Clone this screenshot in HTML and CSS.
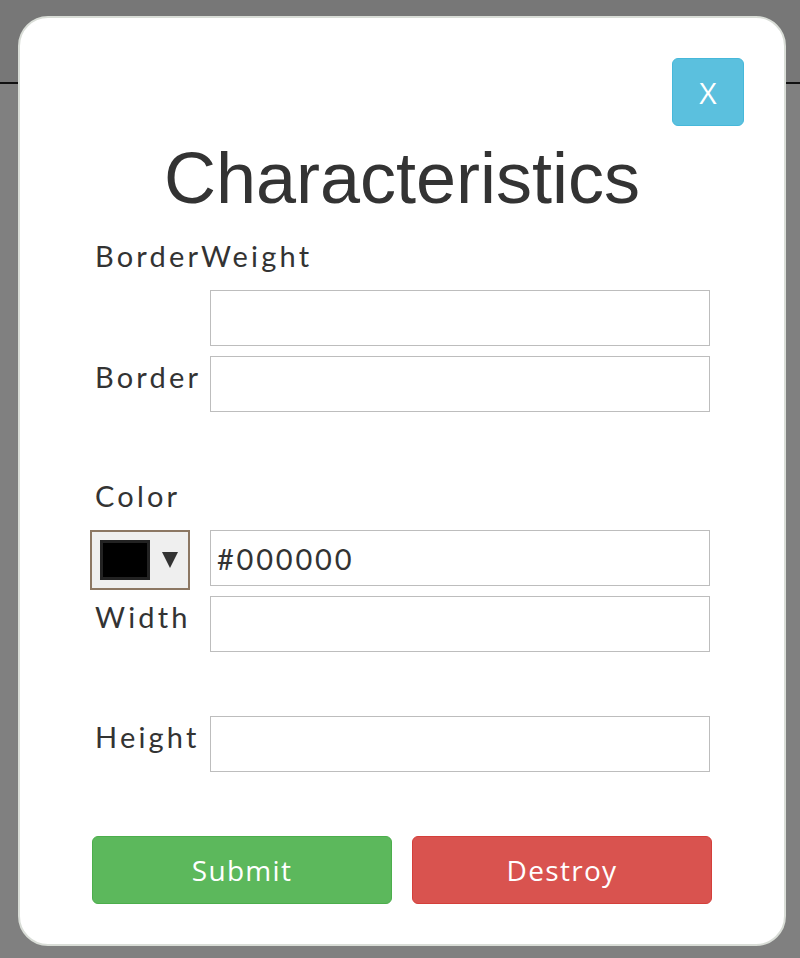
FILE: index.html
```html
<!DOCTYPE html>
<html>
<head>
<meta charset="utf-8">
<link rel="stylesheet" href="styles.css">
</head>
<body>
<div class="backdrop">
  <div class="topbar"></div>
  <div class="rest"></div>
</div>
<div class="modal">
  <button class="close-btn">X</button>
  <h1 class="title">Characteristics</h1>
  <div class="label label-top">BorderWeight</div>
  <div class="row row-first">
    <div class="label-cell"></div>
    <input class="field" type="text">
  </div>
  <div class="row row-gap10">
    <div class="label-cell">Border</div>
    <input class="field" type="text">
  </div>
  <div class="label label-color">Color</div>
  <div class="row row-first">
    <div class="label-cell picker-cell">
      <div class="picker">
        <span class="swatch"></span>
        <svg class="arrow" width="16" height="16" viewBox="0 0 16 16"><polygon points="0,0 16,0 8,16" fill="#333"/></svg>
      </div>
    </div>
    <input class="field" type="text" value="#000000">
  </div>
  <div class="row row-gap6">
    <div class="label-cell">Width</div>
    <input class="field" type="text">
  </div>
  <div class="row row-gap64">
    <div class="label-cell">Height</div>
    <input class="field" type="text">
  </div>
  <div class="actions">
    <button class="btn btn-submit">Submit</button>
    <button class="btn btn-destroy">Destroy</button>
  </div>
</div>
</body>
</html>
```

FILE: styles.css
```css
html, body {
  margin: 0;
  padding: 0;
  height: 100%;
}
body {
  background: #808080;
  font-family: Lato, "Liberation Sans", sans-serif;
  color: #333;
}
.backdrop {
  display: flex;
  flex-direction: column;
  height: 958px;
}
.topbar {
  height: 82px;
  background: #777777;
  border-bottom: 2px solid #111;
}
.rest {
  flex: 1;
  background: #808080;
}
.modal {
  position: absolute;
  left: 18px;
  top: 16px;
  width: 768px;
  height: 930px;
  box-sizing: border-box;
  background: #fff;
  border: 2px solid #d9ddd7;
  border-radius: 30px;
  padding: 120px 72px 0 72px;
  display: flex;
  flex-direction: column;
}
.close-btn {
  position: absolute;
  top: 40px;
  right: 40px;
  width: 72px;
  height: 68px;
  box-sizing: border-box;
  background: #5bc0de;
  border: 1px solid #46b8da;
  border-radius: 6px;
  color: #fff;
  font-family: "Open Sans", sans-serif;
  font-weight: 400;
  font-size: 30px;
  padding: 0;
}
.title {
  margin: 0;
  font-family: "Liberation Sans", Arial, sans-serif;
  font-weight: normal;
  font-size: 72px;
  line-height: 80px;
  text-align: center;
  color: #333;
}
.label, .label-cell {
  font-size: 29px;
  line-height: 42px;
  padding-bottom: 2px;
  letter-spacing: 3.2px;
  color: #333;
  padding-left: 3px;
  box-sizing: border-box;
}
.label-top {
  margin-top: 17px;
}
.label-color {
  margin-top: 63px;
}
.row {
  display: flex;
  align-items: flex-start;
}
.row-first { margin-top: 11px; }
.row-gap10 { margin-top: 10px; }
.row-gap6 { margin-top: 6px; }
.row-gap64 { margin-top: 64px; }
.label-cell {
  width: 118px;
  flex: none;
  white-space: nowrap;
}
.picker-cell {
  padding-left: 0;
  padding-bottom: 0;
}
.field {
  width: 500px;
  height: 56px;
  box-sizing: border-box;
  border: 1px solid #bdbdbd;
  margin: 0;
  padding: 0 6px;
  font-family: Lato, sans-serif;
  font-size: 29px;
  letter-spacing: 2.8px;
  color: #333;
  background: #fff;
}
.picker {
  margin-left: -2px;
  width: 100px;
  height: 60px;
  box-sizing: border-box;
  border: 2px solid #8c7763;
  background: #efefef;
  display: flex;
  align-items: center;
  padding-left: 8px;
  gap: 12px;
}
.swatch {
  width: 50px;
  height: 40px;
  box-sizing: border-box;
  border: 3px solid #222;
  background: #000;
}
.arrow {
  display: block;
}
.actions {
  margin-top: 64px;
  display: flex;
  gap: 20px;
}
.btn {
  width: 300px;
  height: 68px;
  box-sizing: border-box;
  border-radius: 6px;
  color: #fff;
  font-family: "Open Sans", sans-serif;
  font-size: 28px;
  letter-spacing: 1.3px;
  padding: 0;
}
.btn-submit {
  background: #5cb85c;
  border: 1px solid #4cae4c;
}
.btn-destroy {
  background: #d9534f;
  border: 1px solid #d43f3a;
}
```
